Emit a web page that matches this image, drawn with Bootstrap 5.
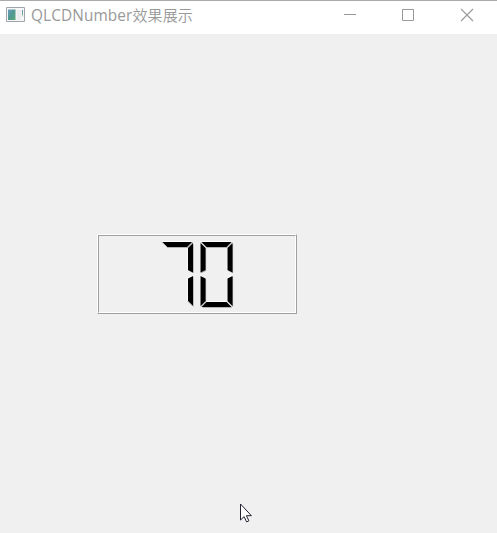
<!DOCTYPE html>
<html lang="zh-CN">
<head>
<meta charset="utf-8">
<meta name="viewport" content="width=device-width, initial-scale=1">
<title>QLCDNumber效果展示</title>
<link href="https://cdn.jsdelivr.net/npm/bootstrap@5.3.0/dist/css/bootstrap.min.css" rel="stylesheet">
<style>
body{background:#f0f0f0;font-family:"Open Sans","Noto Sans CJK SC",sans-serif}
svg{display:block}
.titlebar{height:34px;border-top:1px solid #aaa;background:#fff;color:#999;padding:0 2px 0 6px}
.app-icon{margin-top:-6px}
.app-title{font-size:15.4px;letter-spacing:.1px;line-height:24px;margin-left:6px;margin-top:-4px;white-space:nowrap}
.app-title span{font-family:"Noto Sans CJK SC",sans-serif;font-size:15px;font-weight:350}
.win-btn{width:58px;height:28px;margin-bottom:5px;color:#999;background:none;border:0;padding:0}
.client{padding:200px 0 0 97px}
.lcd{width:200px;height:80px;border:1px solid;border-color:#fff #a0a0a0 #a0a0a0 #fff}
.lcd-inner{border:1px solid;border-color:#a0a0a0 #fff #fff #a0a0a0}
.pointer{left:240px;top:503px}
</style>
</head>
<body class="vh-100 overflow-hidden position-relative">
<header class="titlebar d-flex align-items-center">
  <svg class="app-icon flex-shrink-0" width="19" height="15" viewBox="0 0 19 15">
    <defs><linearGradient id="pane" x2="1" y2="1"><stop stop-color="#6c9ac0"/><stop offset=".5" stop-color="#4f9990"/><stop offset="1" stop-color="#5aa777"/></linearGradient>
    <linearGradient id="strip" x2="0" y2="1"><stop stop-color="#6688cc"/><stop offset=".6" stop-color="#68ad92"/><stop offset="1" stop-color="#e4f0e6"/></linearGradient></defs>
    <path fill="#f7f7f8" stroke="#a0a5ab" d="M.5.5h18v14H.5z"/>
    <path fill="url(#pane)" d="M2 2.500h7.500v10.500H2z"/>
    <path fill="#ececef" d="M10.500 3h4.500v10h-4.500z"/>
    <path fill="url(#strip)" d="M16 3h1v7h-1z"/>
  </svg>
  <div class="app-title">QLCDNumber<span>效果展示</span></div>
  <div class="d-flex ms-auto">
    <button class="win-btn" aria-label="Minimize"><svg width="58" height="28"><path d="M23 13.5h12" stroke="currentColor"/></svg></button>
    <button class="win-btn" aria-label="Maximize"><svg width="58" height="28"><path d="M23.5 8.5h11v11h-11z" fill="none" stroke="currentColor"/></svg></button>
    <button class="win-btn" aria-label="Close"><svg width="58" height="28"><path d="M24 8l12 12M36 8L24 20" stroke="currentColor" stroke-width="1.1"/></svg></button>
  </div>
</header>
<main class="client">
  <div class="lcd"><div class="lcd-inner h-100">
    <svg width="196" height="76" viewBox="99 236 196 76" role="img" aria-label="70">
      <defs>
        <path id="top" d="M1 0H31L26 5H6z"/>
        <path id="ur" d="M32 1V30.500L27 28V6z"/>
        <path id="lr" d="M32 34V64L27 59V36.500z"/>
        <path id="ul" d="M0 1V30.500L5 28V6z"/>
        <path id="ll" d="M0 34V64L5 59V36.500z"/>
        <path id="bot" d="M1 65H31L26 60H6z"/>
        <g id="seven"><use href="#top"/><use href="#ur"/><use href="#lr"/></g>
        <g id="zero"><use href="#seven"/><use href="#ul"/><use href="#ll"/><use href="#bot"/></g>
        <g id="number"><use href="#seven" x="161" y="242"/><use href="#zero" x="200.500" y="242"/></g>
        <path id="joints" d="M161.500 241.500L167 247M187.500 247.500L193 242M201 242.500L206 247.500M227 247.500L232 242.500M201 306.500L206 301.500M227 301.500L232 306.500M188 301.500L193 306.500"/>
      </defs>
      <use href="#number" x="-.7" y="-.9" fill="#fff"/>
      <use href="#number" x=".6" y=".8" fill="#a0a0a0"/>
      <use href="#number" fill="#000"/>
      <use href="#joints" fill="none" stroke="#b8b8b8" stroke-width=".9"/>
    </svg>
  </div></div>
</main>
<svg class="pointer position-absolute" width="13" height="20" viewBox="0 0 13 20"><path d="M.5 1v16l3.600-3.400 2.500 5.300 2.300-1.100-2.500-5.100h5z" fill="#fff" stroke="#223" stroke-width="1"/></svg>
<script src="https://cdn.jsdelivr.net/npm/bootstrap@5.3.0/dist/js/bootstrap.bundle.min.js"></script>
</body>
</html>
